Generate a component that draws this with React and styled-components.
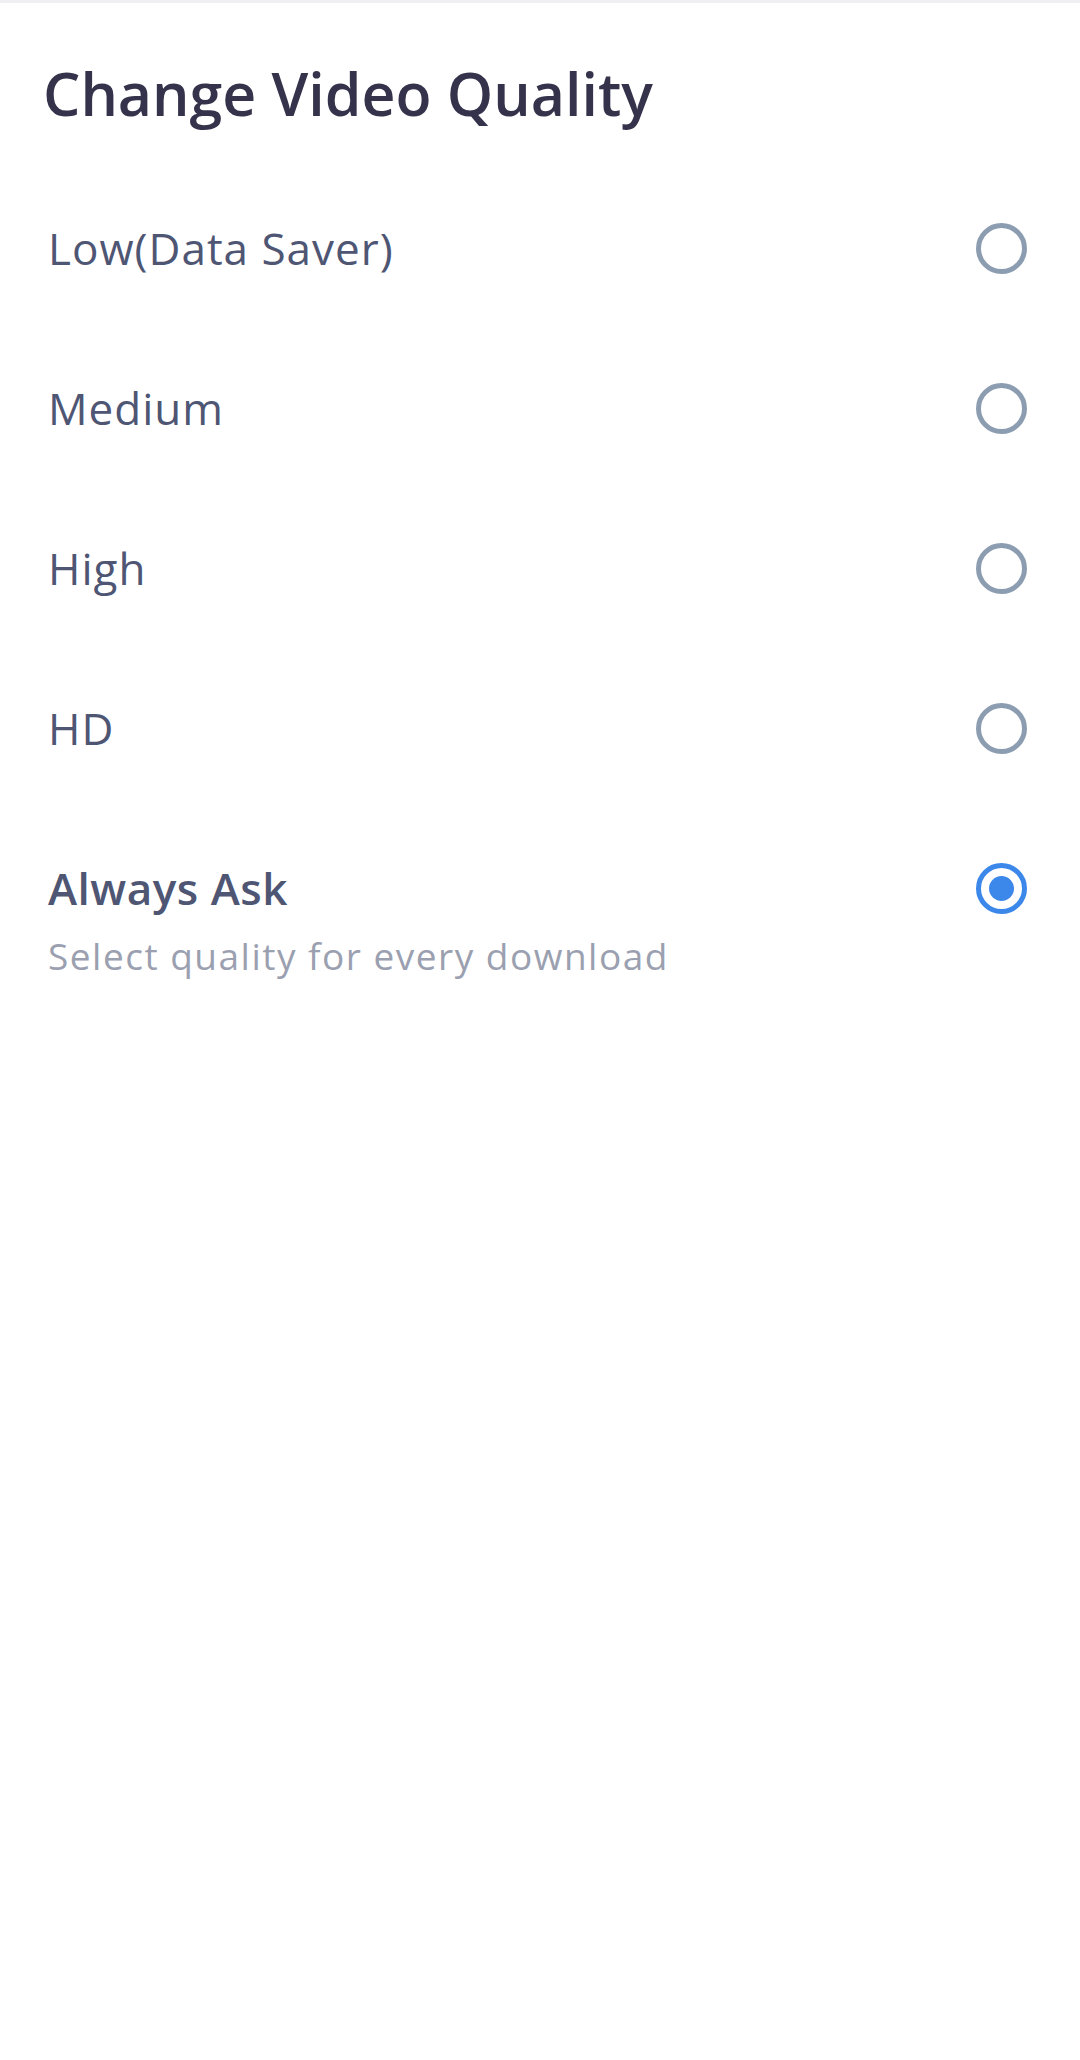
import styled, { createGlobalStyle } from "styled-components";
import { useState } from "react";

const GlobalStyle = createGlobalStyle`
  html, body {
    margin: 0;
    padding: 0;
    background: #ffffff;
  }
  body {
    font-family: "Open Sans", "Noto Sans", sans-serif;
    -webkit-font-smoothing: antialiased;
  }
`;

const options = [
  { id: "low", label: "Low(Data Saver)" },
  { id: "medium", label: "Medium" },
  { id: "high", label: "High" },
  { id: "hd", label: "HD" },
  { id: "ask", label: "Always Ask", hint: "Select quality for every download" },
];

const App = () => {
  const [selected, setSelected] = useState("ask");
  return (
    <>
      <GlobalStyle />
      <Screen>
        <Header>
          <Title>Change Video Quality</Title>
        </Header>
        <List>
          {options.map((opt) => (
            <Option key={opt.id} onClick={() => setSelected(opt.id)}>
              <Label active={selected === opt.id}>{opt.label}</Label>
              <Radio checked={selected === opt.id} />
              {opt.hint && <Hint>{opt.hint}</Hint>}
            </Option>
          ))}
        </List>
      </Screen>
    </>
  );
};

const Screen = styled.div`
  min-height: 2060px;
  background: #ffffff;
  border-top: 3px solid #efeff1;
  box-sizing: border-box;
`;

const Header = styled.header`
  padding: 58px 49px 43px 43px;
`;

const Title = styled.h1`
  margin: 0;
  font-size: 59px;
  line-height: 64px;
  font-weight: 600;
  color: #35334b;
`;

const List = styled.ul`
  list-style: none;
  margin: 0;
  padding: 0;
`;

const Option = styled.li`
  display: grid;
  grid-template-columns: 1fr auto;
  align-items: center;
  column-gap: 24px;
  padding: 55px 53px 54px 48px;
  cursor: pointer;
`;

const Label = styled.span`
  font-size: 44px;
  line-height: 51px;
  letter-spacing: ${(p) => (p.active ? "0.5px" : "1px")};
  font-weight: ${(p) => (p.active ? 600 : 400)};
  color: #4e5674;
`;

const Hint = styled.span`
  grid-column: 1 / 2;
  margin-top: 20px;
  font-size: 37px;
  line-height: 44px;
  letter-spacing: 1.5px;
  color: #9ba0b0;
`;

const Radio = styled.span`
  width: 51px;
  height: 51px;
  box-sizing: border-box;
  border-radius: 50%;
  border: 5px solid ${(p) => (p.checked ? "#3c87ea" : "#8d9db1")};
  display: flex;
  align-items: center;
  justify-content: center;

  &::after {
    content: "";
    width: 25px;
    height: 25px;
    border-radius: 50%;
    background: #3c87ea;
    display: ${(p) => (p.checked ? "block" : "none")};
  }
`;

export default App;
